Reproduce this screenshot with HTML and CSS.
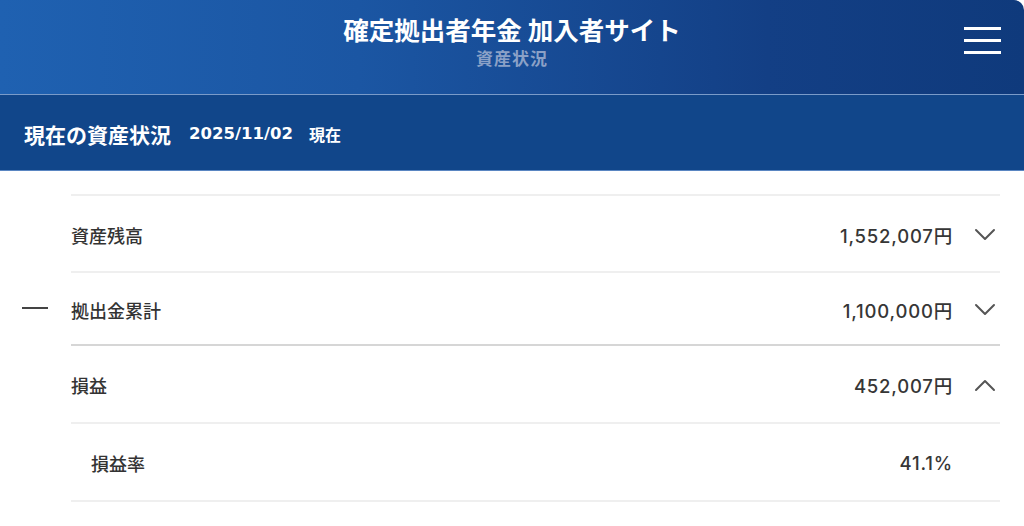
FILE: index.html
```html
<!DOCTYPE html>
<html lang="ja">
<head>
<meta charset="utf-8">
<title>資産状況</title>
<link rel="stylesheet" href="styles.css">
</head>
<body>
<header class="site-header">
  <div class="site-title">
    <h1 class="site-name">確定拠出者年金 加入者サイト</h1>
    <p class="page-name">資産状況</p>
  </div>
  <button class="menu-btn" aria-label="メニュー">
    <span class="bar"></span><span class="bar"></span><span class="bar"></span>
  </button>
</header>
<section class="section-head">
  <h2 class="section-title">現在の資産状況</h2>
  <span class="section-date">2025/11/02</span>
  <span class="section-now">現在</span>
</section>
<main class="content">
  <ul class="calc">
    <li class="calc-row">
      <span class="op"></span>
      <div class="item item-first">
        <span class="label">資産残高</span>
        <span class="value">1,552,007円</span>
        <span class="chev"><svg viewBox="0 0 24 14" width="24" height="14"><path d="M3 2 L12 11 L21 2" fill="none" stroke="#555" stroke-width="2" stroke-linecap="round" stroke-linejoin="round"/></svg></span>
      </div>
    </li>
    <li class="calc-row">
      <span class="op"><span class="minus"></span></span>
      <div class="item item-second">
        <span class="label">拠出金累計</span>
        <span class="value">1,100,000円</span>
        <span class="chev"><svg viewBox="0 0 24 14" width="24" height="14"><path d="M3 2 L12 11 L21 2" fill="none" stroke="#555" stroke-width="2" stroke-linecap="round" stroke-linejoin="round"/></svg></span>
      </div>
    </li>
    <li class="calc-row">
      <span class="op"></span>
      <div class="item item-total">
        <span class="label">損益</span>
        <span class="value">452,007円</span>
        <span class="chev"><svg viewBox="0 0 24 14" width="24" height="14"><path d="M3 12 L12 3 L21 12" fill="none" stroke="#555" stroke-width="2" stroke-linecap="round" stroke-linejoin="round"/></svg></span>
      </div>
    </li>
    <li class="calc-row">
      <span class="op"></span>
      <div class="item item-sub item-last">
        <span class="label">損益率</span>
        <span class="value">41.1%</span>
        <span class="chev"></span>
      </div>
    </li>
  </ul>
</main>
</body>
</html>
```

FILE: styles.css
```css
* { box-sizing: border-box; }
html, body { margin: 0; padding: 0; background: #fff; }
body {
  font-family: "Noto Sans CJK JP", "Noto Sans", sans-serif;
  color: #333;
  width: 1024px;
  overflow: hidden;
}
.site-header {
  height: 95px;
  background: linear-gradient(90deg, #1f61b1 0%, #1b56a3 35%, #133f85 75%, #0f3a7c 100%);
  border-top-right-radius: 10px;
  border-bottom: 1px solid #7a9bc9;
  display: flex;
  align-items: flex-start;
  justify-content: center;
  position: relative;
}
.site-title {
  display: flex;
  flex-direction: column;
  align-items: center;
  padding-top: 12px;
}
.site-name {
  margin: 0;
  font-size: 25.5px;
  line-height: 34px;
  font-weight: 700;
  color: #fff;
}
.page-name {
  margin: 0;
  font-size: 17px;
  line-height: 24px;
  font-weight: 700;
  letter-spacing: 1px;
  color: #8ba1c7;
}
.menu-btn {
  position: absolute;
  right: 23px;
  top: 27px;
  width: 37px;
  height: 27px;
  padding: 0;
  border: 0;
  background: none;
  display: flex;
  flex-direction: column;
  justify-content: space-between;
}
.menu-btn .bar {
  display: block;
  height: 3px;
  background: #fff;
}
.section-head {
  height: 76px;
  background: #11468a;
  border-bottom: 1px solid #5a86c2;
  display: flex;
  align-items: center;
  padding-left: 24px;
  padding-top: 2px;
  color: #fff;
}
.section-title {
  margin: 0;
  font-size: 21px;
  font-weight: 700;
}
.section-date {
  margin-left: 18px;
  font-family: "DejaVu Sans", sans-serif;
  font-size: 16.5px;
  font-weight: 700;
}
.section-now {
  margin-left: 16px;
  font-size: 16px;
  font-weight: 700;
}
.content {
  padding-top: 23px;
}
.calc {
  list-style: none;
  margin: 0;
  padding: 0;
}
.calc-row {
  display: flex;
}
.op {
  flex: none;
  width: 71px;
  display: flex;
  align-items: center;
  padding-left: 22px;
  padding-top: 1px;
}
.minus {
  display: block;
  width: 26px;
  height: 2.5px;
  background: #444;
}
.item {
  flex: 1;
  margin-right: 24px;
  border-top: 2px solid #efefef;
  display: flex;
  align-items: center;
  padding-top: 2px;
}
.item-first { height: 77px; }
.item-second { height: 73px; }
.item-total {
  height: 78px;
  border-top: 2px solid #d6d6d6;
}
.item-last {
  height: 80px;
  border-bottom: 2px solid #efefef;
}
.item-sub .label { padding-left: 20px; }
.label {
  flex: 1;
  font-size: 18px;
  font-weight: 500;
  color: #333;
}
.value {
  font-family: "Inter", "Noto Sans CJK JP", sans-serif;
  font-size: 18.5px;
  font-weight: 500;
  letter-spacing: 0.8px;
  color: #363636;
}
.chev {
  flex: none;
  width: 24px;
  height: 14px;
  margin-left: 20px;
  margin-right: 3px;
  display: flex;
}
.chev svg { display: block; }
```
